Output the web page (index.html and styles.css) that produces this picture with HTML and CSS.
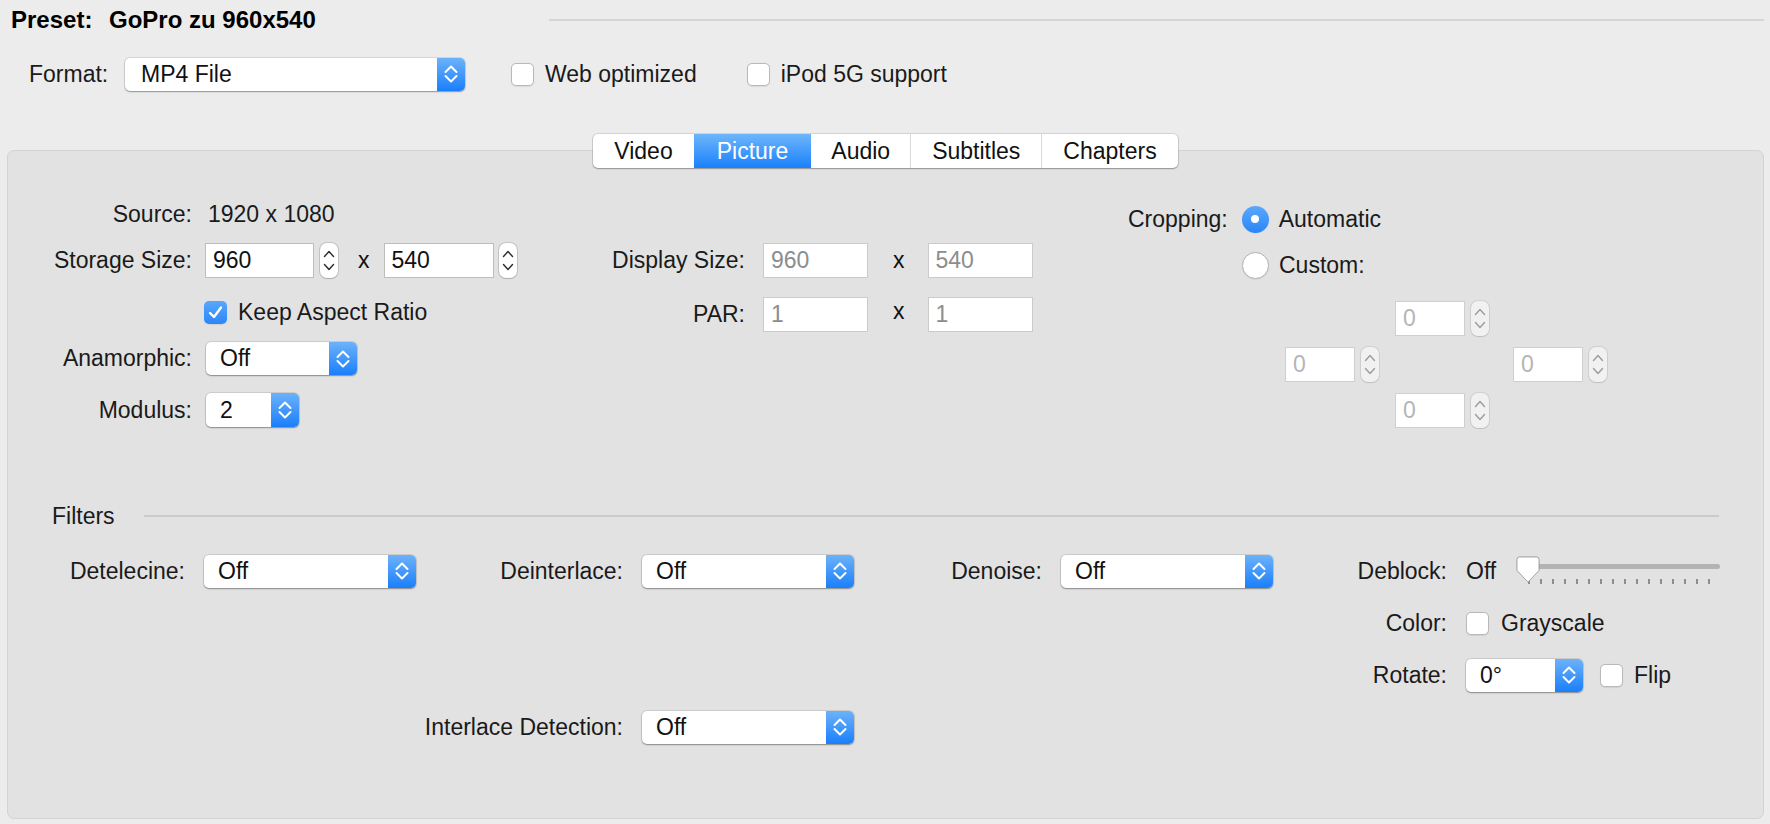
FILE: index.html
```html
<!DOCTYPE html>
<html>
<head>
<meta charset="utf-8">
<title>HandBrake Picture</title>
<link rel="stylesheet" href="styles.css">
</head>
<body>
<div class="window">
  <div class="preset-row">
    <span class="preset-label">Preset:</span>
    <span class="preset-name">GoPro zu 960x540</span>
    <span class="preset-line"></span>
  </div>

  <div class="format-row">
    <span class="format-label">Format:</span>
    <div class="popup popup-format">
      <span class="popup-text">MP4 File</span>
      <span class="popup-arrows"><svg viewBox="0 0 16 22" width="16" height="22"><path d="M2.5 9L8 3.5L13.5 9M2.5 13L8 18.5L13.5 13" fill="none" stroke="#fff" stroke-width="2" stroke-linecap="round" stroke-linejoin="round"/></svg></span>
    </div>
    <div class="check check-web"><span class="box"></span><span>Web optimized</span></div>
    <div class="check check-ipod"><span class="box"></span><span>iPod 5G support</span></div>
  </div>

  <div class="tabs">
    <div class="tabgroup">
      <div class="tab">Video</div>
      <div class="tab active">Picture</div>
      <div class="tab after-active">Audio</div>
      <div class="tab">Subtitles</div>
      <div class="tab">Chapters</div>
    </div>
  </div>

  <div class="panel">
    <div class="picture-top">
      <div class="size-block">
        <div class="row row-source">
          <span class="lbl">Source:</span>
          <span class="value">1920 x 1080</span>
        </div>
        <div class="row row-storage">
          <span class="lbl">Storage Size:</span>
          <div class="field field-storage">960</div>
          <span class="stepper"><svg viewBox="0 0 18 35" width="18" height="35"><path d="M4.5 13.5L9 8.5L13.5 13.5M4.5 21.5L9 26.5L13.5 21.5" fill="none" stroke="#2a2a2a" stroke-width="1.4" stroke-linecap="round" stroke-linejoin="round"/></svg></span>
          <span class="times times-storage">x</span>
          <div class="field field-storage field-second">540</div>
          <span class="stepper stepper-second"><svg viewBox="0 0 18 35" width="18" height="35"><path d="M4.5 13.5L9 8.5L13.5 13.5M4.5 21.5L9 26.5L13.5 21.5" fill="none" stroke="#2a2a2a" stroke-width="1.4" stroke-linecap="round" stroke-linejoin="round"/></svg></span>
        </div>
        <div class="row row-keep">
          <span class="lbl"></span>
          <div class="check check-keep"><span class="box checked"><svg viewBox="0 0 23 23" width="23" height="23"><path d="M6 12L10 16L17 6.5" fill="none" stroke="#fff" stroke-width="2.4" stroke-linecap="round" stroke-linejoin="round"/></svg></span><span>Keep Aspect Ratio</span></div>
        </div>
        <div class="row row-anamorphic">
          <span class="lbl">Anamorphic:</span>
          <div class="popup popup-anamorphic">
            <span class="popup-text">Off</span>
            <span class="popup-arrows"><svg viewBox="0 0 16 22" width="16" height="22"><path d="M2.5 9L8 3.5L13.5 9M2.5 13L8 18.5L13.5 13" fill="none" stroke="#fff" stroke-width="2" stroke-linecap="round" stroke-linejoin="round"/></svg></span>
          </div>
        </div>
        <div class="row row-modulus">
          <span class="lbl">Modulus:</span>
          <div class="popup popup-modulus">
            <span class="popup-text">2</span>
            <span class="popup-arrows"><svg viewBox="0 0 16 22" width="16" height="22"><path d="M2.5 9L8 3.5L13.5 9M2.5 13L8 18.5L13.5 13" fill="none" stroke="#fff" stroke-width="2" stroke-linecap="round" stroke-linejoin="round"/></svg></span>
          </div>
        </div>
      </div>

      <div class="display-block">
        <div class="row row-display">
          <span class="lbl">Display Size:</span>
          <div class="field field-disabled">960</div>
          <span class="times">x</span>
          <div class="field field-disabled field-second">540</div>
        </div>
        <div class="row row-par">
          <span class="lbl">PAR:</span>
          <div class="field field-disabled">1</div>
          <span class="times times-par">x</span>
          <div class="field field-disabled field-second">1</div>
        </div>
      </div>

      <div class="crop-block">
        <div class="row row-auto">
          <span class="crop-label">Cropping:</span>
          <span class="radio selected"></span>
          <span class="radio-text">Automatic</span>
        </div>
        <div class="row row-custom">
          <span class="radio"></span>
          <span class="radio-text">Custom:</span>
        </div>
        <div class="crop-grid">
          <div class="crop-cell crop-top"><div class="field field-crop">0</div><span class="stepper stepper-crop"><svg viewBox="0 0 18 35" width="18" height="35"><path d="M4.5 13.5L9 8.5L13.5 13.5M4.5 21.5L9 26.5L13.5 21.5" fill="none" stroke="#9c9c9c" stroke-width="1.4" stroke-linecap="round" stroke-linejoin="round"/></svg></span></div>
          <div class="crop-cell crop-left"><div class="field field-crop">0</div><span class="stepper stepper-crop"><svg viewBox="0 0 18 35" width="18" height="35"><path d="M4.5 13.5L9 8.5L13.5 13.5M4.5 21.5L9 26.5L13.5 21.5" fill="none" stroke="#9c9c9c" stroke-width="1.4" stroke-linecap="round" stroke-linejoin="round"/></svg></span></div>
          <div class="crop-cell crop-right"><div class="field field-crop">0</div><span class="stepper stepper-crop"><svg viewBox="0 0 18 35" width="18" height="35"><path d="M4.5 13.5L9 8.5L13.5 13.5M4.5 21.5L9 26.5L13.5 21.5" fill="none" stroke="#9c9c9c" stroke-width="1.4" stroke-linecap="round" stroke-linejoin="round"/></svg></span></div>
          <div class="crop-cell crop-bottom"><div class="field field-crop">0</div><span class="stepper stepper-crop"><svg viewBox="0 0 18 35" width="18" height="35"><path d="M4.5 13.5L9 8.5L13.5 13.5M4.5 21.5L9 26.5L13.5 21.5" fill="none" stroke="#9c9c9c" stroke-width="1.4" stroke-linecap="round" stroke-linejoin="round"/></svg></span></div>
        </div>
      </div>
    </div>

    <div class="filters-head">
      <span class="filters-title">Filters</span>
      <span class="filters-line"></span>
    </div>

    <div class="filters-grid">
      <span class="flbl">Detelecine:</span>
      <div class="fctrl">
        <div class="popup popup-filter">
          <span class="popup-text">Off</span>
          <span class="popup-arrows"><svg viewBox="0 0 16 22" width="16" height="22"><path d="M2.5 9L8 3.5L13.5 9M2.5 13L8 18.5L13.5 13" fill="none" stroke="#fff" stroke-width="2" stroke-linecap="round" stroke-linejoin="round"/></svg></span>
        </div>
      </div>
      <span class="flbl">Deinterlace:</span>
      <div class="fctrl">
        <div class="popup popup-filter">
          <span class="popup-text">Off</span>
          <span class="popup-arrows"><svg viewBox="0 0 16 22" width="16" height="22"><path d="M2.5 9L8 3.5L13.5 9M2.5 13L8 18.5L13.5 13" fill="none" stroke="#fff" stroke-width="2" stroke-linecap="round" stroke-linejoin="round"/></svg></span>
        </div>
      </div>
      <span class="flbl">Denoise:</span>
      <div class="fctrl">
        <div class="popup popup-filter">
          <span class="popup-text">Off</span>
          <span class="popup-arrows"><svg viewBox="0 0 16 22" width="16" height="22"><path d="M2.5 9L8 3.5L13.5 9M2.5 13L8 18.5L13.5 13" fill="none" stroke="#fff" stroke-width="2" stroke-linecap="round" stroke-linejoin="round"/></svg></span>
        </div>
      </div>
      <span class="flbl">Deblock:</span>
      <div class="fctrl">
        <span class="deblock-value">Off</span>
        <div class="slider">
          <span class="slider-track"></span>
          <span class="slider-ticks"><i></i><i></i><i></i><i></i><i></i><i></i><i></i><i></i><i></i><i></i><i></i><i></i><i></i><i></i><i></i><i></i></span>
          <svg class="slider-thumb" viewBox="0 0 24 27" width="24" height="27"><path d="M3.5 1H20.5Q23 1 23 3.5V14.5L12 26L1 14.5V3.5Q1 1 3.5 1Z" fill="#fff" stroke="#a9a9a9" stroke-width="1"/></svg>
        </div>
      </div>

      <span class="flbl col-last-label">Color:</span>
      <div class="fctrl col-last-ctrl">
        <div class="check check-gray"><span class="box"></span><span>Grayscale</span></div>
      </div>

      <span class="flbl col-last-label">Rotate:</span>
      <div class="fctrl col-last-ctrl">
        <div class="popup popup-rotate">
          <span class="popup-text">0°</span>
          <span class="popup-arrows"><svg viewBox="0 0 16 22" width="16" height="22"><path d="M2.5 9L8 3.5L13.5 9M2.5 13L8 18.5L13.5 13" fill="none" stroke="#fff" stroke-width="2" stroke-linecap="round" stroke-linejoin="round"/></svg></span>
        </div>
        <div class="check check-flip"><span class="box"></span><span>Flip</span></div>
      </div>

      <span class="flbl interlace-label">Interlace Detection:</span>
      <div class="fctrl interlace-ctrl">
        <div class="popup popup-filter">
          <span class="popup-text">Off</span>
          <span class="popup-arrows"><svg viewBox="0 0 16 22" width="16" height="22"><path d="M2.5 9L8 3.5L13.5 9M2.5 13L8 18.5L13.5 13" fill="none" stroke="#fff" stroke-width="2" stroke-linecap="round" stroke-linejoin="round"/></svg></span>
        </div>
      </div>
    </div>
  </div>
</div>
</body>
</html>
```

FILE: styles.css
```css
* { box-sizing: border-box; }
html, body { margin: 0; padding: 0; }
body {
  background: #ececec;
  font-family: "Liberation Sans", Arial, sans-serif;
  font-size: 23px;
  color: #1a1a1a;
  width: 1770px;
  height: 824px;
  overflow: hidden;
}
.window { display: flex; flex-direction: column; height: 824px; }

/* preset header */
.preset-row {
  display: flex;
  align-items: center;
  height: 40px;
  padding-left: 11px;
  font-weight: bold;
  font-size: 24px;
  color: #000;
}
.preset-label { width: 98px; }
.preset-line {
  flex: 1;
  height: 2px;
  background: #d6d6d6;
  margin-left: 233px;
  margin-right: 6px;
}

/* format row */
.format-row {
  display: flex;
  align-items: center;
  height: 34px;
  margin-top: 17px;
  padding-left: 29px;
}
.format-label { width: 96px; }

/* popup button */
.popup {
  display: flex;
  align-items: stretch;
  height: 33px;
  background: #fff;
  border-radius: 5px;
  box-shadow: 0 0 0 1px rgba(0, 0, 0, 0.09), 0 1px 1.5px rgba(0, 0, 0, 0.32);
  overflow: hidden;
  flex-shrink: 0;
}
.popup-text {
  flex: 1;
  display: flex;
  align-items: center;
  padding-left: 14px;
  color: #111;
}
.popup-arrows {
  width: 28px;
  display: flex;
  align-items: center;
  justify-content: center;
  background: linear-gradient(#6cb2fa, #1a7ffb);
}
.popup-format { width: 340px; }
.popup-format .popup-text { padding-left: 16px; }
.popup-anamorphic { width: 151px; }
.popup-modulus { width: 93px; height: 34px; }
.popup-filter { width: 212px; }
.popup-rotate { width: 117px; }

/* checkbox */
.check { display: flex; align-items: center; flex-shrink: 0; white-space: nowrap; }
.check .box {
  width: 23px;
  height: 23px;
  border-radius: 5px;
  background: #fff;
  border: 1px solid #b9b9b9;
  box-shadow: 0 0.5px 1px rgba(0, 0, 0, 0.08);
  margin-right: 11px;
  flex-shrink: 0;
}
.check .box.checked {
  border: none;
  background: linear-gradient(#5aa7fb, #2b86f7);
  display: flex;
}
.check-web { margin-left: 46px; }
.check-ipod { margin-left: 50px; }
.check-keep { margin-left: -1px; }
.check-gray .box { margin-right: 12px; }
.check-flip { margin-left: 17px; }

/* tabs */
.tabs {
  display: flex;
  justify-content: center;
  margin: 43px 6px 0 7px;
  position: relative;
  z-index: 1;
}
.tabgroup {
  display: flex;
  height: 34px;
  background: #fff;
  border-radius: 5px;
  box-shadow: 0 0 0 1px rgba(0, 0, 0, 0.1), 0 1px 1.5px rgba(0, 0, 0, 0.28);
  overflow: hidden;
}
.tab {
  display: flex;
  align-items: center;
  padding: 0 21px;
  border-left: 1px solid #d9d9d9;
  color: #111;
}
.tab:first-child { border-left: none; }
.tab.active {
  background: linear-gradient(#6db5fb, #1a81fb);
  color: #fff;
  border-left: none;
  padding: 0 23px;
}
.tab.after-active { border-left: none; padding: 0 20px; }

/* panel */
.panel {
  margin: -18px 6px 0 7px;
  height: 669px;
  border: 1px solid #d3d3d3;
  border-radius: 7px;
  background: #e2e2e2;
  display: flex;
  flex-direction: column;
}

.picture-top { display: flex; height: 290px; }
.row { display: flex; align-items: center; }

/* size block */
.size-block { width: 592px; padding-left: 32px; }
.size-block .lbl {
  width: 152px;
  text-align: right;
  margin-right: 13px;
  flex-shrink: 0;
}
.row-source { margin-top: 48px; height: 30px; }
.value { margin-left: 3px; }
.row-storage { margin-top: 14px; height: 35px; }
.row-keep { margin-top: 22px; height: 24px; }
.row-anamorphic { margin-top: 18px; height: 33px; }
.row-anamorphic .popup { margin-left: 1px; }
.row-modulus { margin-top: 18px; height: 34px; }
.row-modulus .popup { margin-left: 1px; }

.field {
  height: 35px;
  background: #fff;
  border: 1px solid #bdbdbd;
  display: flex;
  align-items: center;
  padding-left: 7px;
  color: #111;
  flex-shrink: 0;
}
.field-storage { width: 109px; }
.field-storage.field-second { width: 110px; margin-left: 14px; }
.stepper {
  width: 18px;
  height: 35px;
  border-radius: 7px;
  background: #fff;
  box-shadow: 0 0 0 1px rgba(0, 0, 0, 0.13), 0 1px 1px rgba(0, 0, 0, 0.12);
  margin-left: 6px;
  display: flex;
  flex-shrink: 0;
}
.stepper-second { margin-left: 5px; }
.times { color: #111; }
.times-storage { margin-left: 20px; }

/* display block */
.display-block { width: 528px; }
.display-block .lbl {
  width: 145px;
  text-align: right;
  margin-right: 18px;
  flex-shrink: 0;
}
.row-display { margin-top: 92px; height: 35px; }
.row-par { margin-top: 19px; height: 35px; }
.field-disabled {
  width: 105px;
  border-color: #cbcbcb;
  color: #8d8d8d;
}
.display-block .times { margin-left: 25px; }
.display-block .field-second { margin-left: 23px; }
.times-par { position: relative; top: -3px; }

/* crop block */
.crop-block { flex: 1; }
.row-auto { margin-top: 54px; height: 28px; }
.crop-label { margin-right: 14px; }
.radio {
  width: 27px;
  height: 27px;
  border-radius: 50%;
  background: #fff;
  border: 1px solid #b3b3b3;
  box-shadow: 0 0.5px 1px rgba(0, 0, 0, 0.1);
  flex-shrink: 0;
  display: flex;
  align-items: center;
  justify-content: center;
}
.radio.selected {
  border: none;
  background: linear-gradient(#5ba8fb, #2a86f8);
}
.radio.selected::after {
  content: "";
  width: 8px;
  height: 8px;
  border-radius: 50%;
  background: #fff;
}
.radio-text { margin-left: 10px; }
.row-custom { margin-top: 18px; height: 28px; padding-left: 114px; }

.crop-grid {
  margin-top: 22px;
  margin-left: 157px;
  display: grid;
  grid-template-columns: 110px 118px 94px;
  grid-template-rows: 35px 35px 35px;
  row-gap: 11px;
}
.crop-cell { display: flex; align-items: center; }
.crop-top { grid-column: 2; grid-row: 1; }
.crop-left { grid-column: 1; grid-row: 2; }
.crop-right { grid-column: 3; grid-row: 2; }
.crop-bottom { grid-column: 2; grid-row: 3; }
.field-crop {
  width: 70px;
  border-color: #cfcfcf;
  color: #b5b5b5;
}
.stepper-crop {
  background: #f1f1f1;
  box-shadow: 0 0 0 1px rgba(0, 0, 0, 0.08), 0 1px 1px rgba(0, 0, 0, 0.08);
}

/* filters */
.filters-head {
  display: flex;
  align-items: center;
  height: 24px;
  margin-top: 63px;
  padding-left: 44px;
  padding-right: 44px;
}
.filters-line {
  flex: 1;
  height: 2px;
  background: #cbcbcb;
  margin-left: 29px;
}

.filters-grid {
  margin-top: 17px;
  padding-left: 32px;
  display: grid;
  grid-template-columns: 145px 212px 188px 212px 169px 211px 156px 254px;
  grid-auto-rows: 52px;
  column-gap: 19px;
}
.flbl {
  align-self: center;
  text-align: right;
  white-space: nowrap;
}
.fctrl { display: flex; align-items: center; }
.col-last-label { grid-column: 7; }
.col-last-ctrl { grid-column: 8; }
.interlace-label { grid-column: 1 / span 3; grid-row: 4; }
.interlace-ctrl { grid-column: 4; grid-row: 4; }

.deblock-value { width: 50px; flex-shrink: 0; }
.slider {
  position: relative;
  width: 205px;
  height: 28px;
}
.slider-track {
  position: absolute;
  left: 2px;
  right: 0;
  top: 7px;
  height: 5px;
  border-radius: 3px;
  background: #b3b3b3;
}
.slider-ticks {
  position: absolute;
  left: 12px;
  right: 10px;
  top: 22px;
  height: 5px;
  display: flex;
  justify-content: space-between;
}
.slider-ticks i {
  display: block;
  width: 1.5px;
  height: 5px;
  background: #8e8e8e;
}
.slider-thumb {
  position: absolute;
  left: 0;
  top: -1px;
  filter: drop-shadow(0 0.5px 0.6px rgba(0, 0, 0, 0.2));
}
```
